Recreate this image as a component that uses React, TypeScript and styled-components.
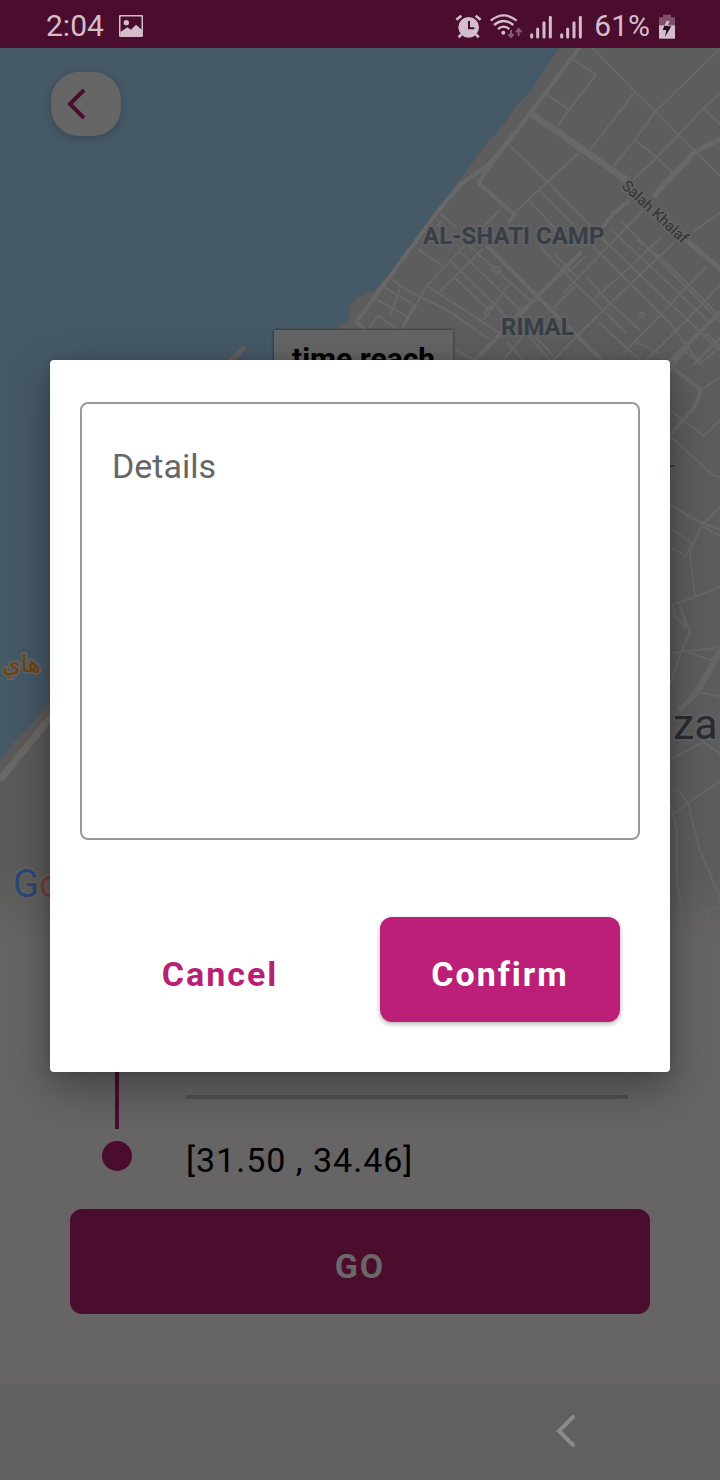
import React from "react";
import styled, { createGlobalStyle } from "styled-components";

const GlobalStyle = createGlobalStyle`
  * { box-sizing: border-box; }
  body { margin: 0; background: #666465; font-family: Roboto, "Noto Sans", sans-serif; }
  button, textarea { font-family: inherit; }
`;

const Page = styled.div`
  min-height: 100vh;
  display: flex;
  flex-direction: column;
`;

const StatusBar = styled.header`
  display: flex;
  justify-content: space-between;
  align-items: center;
  height: 48px;
  padding: 4px 44px 0 46px;
  background: #4b0d2e;
  color: #d4bdcb;
  font-size: 30px;
  line-height: 44px;
`;

const StatusGroup = styled.div<{ $gap: number }>`
  display: flex;
  align-items: center;
  gap: ${(p) => p.$gap}px;
`;

const Screen = styled.main`
  position: relative;
  flex: 1;
  display: flex;
  flex-direction: column;
`;

const MapArea = styled.section`
  position: relative;
  flex: 1;
  padding: 24px 51px;
  overflow: hidden;
  background: #5d5d5d;
`;

const MapDrawing = styled.svg`
  position: absolute;
  inset: 0;
  width: 100%;
  height: 100%;
`;

const BackButton = styled.button`
  position: relative;
  display: flex;
  align-items: center;
  width: 70px;
  height: 64px;
  padding: 0 15px;
  border: 0;
  border-radius: 28px;
  background: #666666;
  box-shadow: 0 2px 10px rgba(0, 0, 0, 0.2);
`;

const InfoWindow = styled.div`
  position: absolute;
  left: 274px;
  top: 282px;
  padding: 12px 18px;
  background: #646464;
  box-shadow: 0 0 3px rgba(0, 0, 0, 0.6);
  color: #000;
  font-size: 30px;
  font-weight: 700;
  line-height: 34px;
`;

const TripPanel = styled.section`
  display: flex;
  flex-direction: column;
  padding: 60px 70px 70px;
  background: #666465;
`;

const Route = styled.div`
  display: grid;
  grid-template-columns: 30px 1fr;
  column-gap: 54px;
  row-gap: 12px;
  padding: 0 22px 0 32px;
  margin-bottom: 30px;
`;

const RouteLine = styled.div`
  justify-self: center;
  width: 4px;
  height: 129px;
  background: #4b0d2e;
`;

const Divider = styled.hr`
  align-self: end;
  width: 100%;
  height: 4px;
  margin: 0 0 30px;
  border: 0;
  background: #525051;
`;

const RouteDot = styled.div`
  width: 30px;
  height: 30px;
  border-radius: 50%;
  background: #4b0d2e;
`;

const Coordinates = styled.div`
  color: #000;
  font-size: 34px;
  line-height: 38px;
  letter-spacing: 1px;
`;

const ActionButton = styled.button<{ $bg: string; $color: string; $raised?: boolean }>`
  width: 100%;
  height: 105px;
  padding: 8px 0 0;
  border: 0;
  border-radius: 12px;
  background: ${(p) => p.$bg};
  color: ${(p) => p.$color};
  box-shadow: ${(p) => (p.$raised ? "0 2px 5px rgba(0, 0, 0, 0.3)" : "none")};
  font-size: 34px;
  font-weight: 700;
  line-height: 40px;
  letter-spacing: 2px;
`;

const Overlay = styled.div`
  position: absolute;
  inset: 0;
  display: flex;
  align-items: center;
  padding: 0 50px;
`;

const Dialog = styled.form`
  flex: 1;
  display: flex;
  flex-direction: column;
  padding: 42px 30px 50px;
  border-radius: 4px;
  background: #fff;
  box-shadow: 0 16px 44px rgba(0, 0, 0, 0.34), 0 0 10px rgba(0, 0, 0, 0.14);
`;

const DetailsBox = styled.textarea`
  display: block;
  width: 100%;
  height: 438px;
  padding: 42px 30px;
  border: 2px solid #999;
  border-radius: 8px;
  outline: 0;
  resize: none;
  background: #fff;
  color: #222;
  font-size: 34px;
  line-height: 40px;
  &::placeholder { color: #666; opacity: 1; }
`;

const DialogActions = styled.div`
  display: grid;
  grid-template-columns: 1fr 1fr;
  gap: 40px;
  padding: 0 20px;
  margin-top: 77px;
`;

const NavBar = styled.nav`
  display: flex;
  align-items: center;
  justify-content: flex-end;
  height: 96px;
  padding-right: 20%;
  background: #606060;
`;

const NavButton = styled.button`
  display: flex;
  padding: 0;
  border: 0;
  background: none;
`;

const PictureIcon = () => (
  <svg width="24" height="22" viewBox="357 42 72 66" fill="none">
    <rect x="359" y="44" width="68" height="62" rx="4" stroke="currentColor" strokeWidth="5" />
    <circle cx="379" cy="65" r="8" fill="currentColor" />
    <path d="M361 93 L382 79 L393 86 L408 71 L427 88 V106 H361 Z" fill="currentColor" />
  </svg>
);

const AlarmIcon = () => (
  <svg width="27" height="25" viewBox="45 37 81 75" fill="none" stroke="currentColor">
    <circle cx="86" cy="77" r="31" fill="currentColor" stroke="none" />
    <path d="M49 54 L64 42 M107 42 L122 54" strokeWidth="8" />
    <path d="M64 98 L56 107 M108 98 L116 107" strokeWidth="8" />
    <path d="M87 58 V80 H103" stroke="#4b0d2e" strokeWidth="6" />
  </svg>
);

const WifiIcon = () => (
  <svg width="32" height="25" viewBox="150 37 96 75" fill="none" stroke="currentColor">
    <path d="M152 57 Q191 25 230 57 M162 70 Q191 46 220 70 M174 82 Q191 68 208 82" strokeWidth="7" />
    <circle cx="190" cy="93" r="6" fill="currentColor" stroke="none" />
    <g stroke="#875a74" strokeWidth="6">
      <path d="M213 85 V105 M205 97 L213 106 L221 97" />
      <path d="M236 103 V83 M228 91 L236 82 L244 91" />
    </g>
  </svg>
);

const SignalIcon = ({ width }: { width: number }) => (
  <svg width={width} height="25" viewBox={`270 37 ${width * 3} 75`} stroke="currentColor" strokeWidth="9" strokeLinecap="round">
    <path d="M275 99 V106 M293 82 V106 M312 63 V106 M331 47 V106" />
  </svg>
);

const BatteryIcon = () => (
  <svg width="18" height="25" viewBox="651 37 54 75">
    <path d="M654 47 H666 V39 H690 V47 H702 V72 H654 Z" fill="#80516c" />
    <path d="M654 71 H702 V111 H654 Z" fill="currentColor" />
    <path d="M676 58 H686 L679 74 H691 L672 105 L676 85 H665 Z" fill="#2b0819" />
    <path d="M676 58 H686 L680 72 H670 Z" fill="currentColor" />
  </svg>
);

const labelHalo = { stroke: "#626262", strokeWidth: 4, paintOrder: "stroke" as const, strokeLinejoin: "round" as const };

const CityMap = () => (
  <MapDrawing viewBox="0 48 720 892" preserveAspectRatio="xMidYMin slice" role="img" aria-label="Map of Gaza">
    <defs>
      <linearGradient id="fade" x1="0" y1="0" x2="0" y2="1">
        <stop offset="0" stopColor="#666465" stopOpacity="0" />
        <stop offset="1" stopColor="#666465" />
      </linearGradient>
    </defs>
    <rect y="48" width="720" height="892" fill="#5d5d5d" />
    <path d="M0 760 L50 695 V940 H0 Z" fill="#5d5b59" />
    <path
      d="M0 48 H560 L545 68 L532 90 L515 107 L505 123 L487 143 L467 170 L458 182 L440 207 L420 237 L390 273 L373 292 L367 293 L357 298 L350 307 V317 L347 323 L340 325 L334 332 L300 380 L50 700 L34 722 L14 742 L0 761 Z"
      fill="#465966"
    />
    <path d="M0 780 L20 755 L52 716" stroke="#6a6967" strokeWidth="7" fill="none" />
    <path d="M245 347 L228 363" stroke="#606060" strokeWidth="5" />
    <g transform="translate(340 40) scale(0.3333)" fill="none" stroke="#686868" strokeLinejoin="round">
      <g strokeWidth="12">
        <path d="M720 20 L575 215 L445 375 L365 430 L300 505 L50 845 L78 875" />
        <path d="M575 215 L440 390 L416 430 L524 525 L505 548" />
        <path d="M575 222 L730 330 L860 420" strokeWidth="20" />
        <path d="M1030 592 L1145 690" strokeWidth="15" />
        <path d="M1145 295 L1065 335 L940 470" strokeWidth="16" />
        <path d="M870 480 L820 520 L785 565 M725 635 L592 770 L400 965" />
        <path d="M438 615 L592 770 L790 965" />
        <path d="M1145 812 L975 980" />
      </g>
      <g strokeWidth="6">
        <path d="M700 60 L768 103 L650 260 M620 162 L685 208 M755 20 L885 155 L945 215 L1065 335 M885 155 L750 330" />
        <path d="M1145 22 L945 215 L885 300 L820 380 M1145 155 L1090 205 L1013 287 L950 352 L870 430 M1090 205 L1145 257" />
        <path d="M885 300 L950 352 L1000 400 M1070 340 L1145 412 M720 335 L622 425 L520 522 M510 318 L622 425 L755 560" />
        <path d="M598 452 L705 560 M568 483 L660 580 M480 510 L370 620 L260 740 L185 870 M300 518 L345 560" />
        <path d="M235 628 L310 680 M385 615 L480 700 L580 790 M360 635 L550 820 M330 662 L470 800 L515 850 M345 715 L445 808" />
        <path d="M265 740 L480 880 M300 755 L430 625 M150 712 L190 745 L330 815 L450 900 M130 740 L215 790 M105 775 L140 795 L210 835" />
        <path d="M180 745 L150 830 M225 790 L185 865 M85 865 L115 828 L170 865 M345 928 L400 960" />
        <path d="M455 795 L430 825 M510 730 L430 840 M550 800 L500 860" />
        <path d="M600 620 L710 735 L860 880 M640 640 L720 720 M680 700 L735 650 M705 740 L640 805 M740 600 L990 850 L1080 970" />
        <path d="M765 575 L1000 800 L1145 935 M815 570 L1060 800 L1110 850 M845 545 L1145 850 M890 600 L965 655 L1145 835" />
        <path d="M910 510 L765 660 L670 760 M965 590 L860 690 L760 780 M1000 610 L790 810 L640 960 M1100 680 L985 800 L850 940" />
        <path d="M1145 515 L1060 575 M1145 730 L1050 830 L920 960 M780 850 L850 915 L900 960 M885 905 L960 940" />
        <path d="M740 710 L800 780 L900 870 M560 880 L630 960 M500 905 L550 960 M545 850 L640 945 M490 960 L540 900 L570 850" />
        <path d="M1145 890 L1060 975 M1100 880 L1145 925" />
        <path d="M455 690 L462 678 L478 682 L481 697 L468 702 Z M898 824 L906 816 L914 824 L906 832 Z M290 540 L302 545 L292 560" />
      </g>
    </g>
    <g fill="none" stroke="#676767" strokeWidth="2">
      <path d="M668 364 L701 390 L695 407 L670 435 M668 372 L690 342" strokeWidth="4" />
      <path d="M722 648 L697 692 L679 711" strokeWidth="6" />
      <path d="M670 436 L713 475 L722 477 M670 410 L704 436 L722 418 M701 390 L722 376 M683 349 L700 364 L722 345" />
      <path d="M670 505 L702 523 L722 530" strokeWidth="3" />
      <path d="M670 528 L692 543 L686 556 L670 547 M690 555 L699 530 L704 523 L722 505 M690 555 L695 597 L672 605 M695 597 L722 586" />
      <path d="M702 526 L722 537 M672 605 L675 616 L686 629 L680 605 L690 632 L682 650 L670 684 M670 653 L700 650 L722 647 M682 650 L716 662 M697 692 L722 697" />
      <path d="M670 760 L703 742 L722 755 M670 792 L678 789 L688 803 L722 780 M674 814 L688 803 L699 848 L722 903" />
      <path d="M670 804 L677 830 V880 L682 912 L696 914 L722 906 M709 910 L706 935 M682 912 V938" />
    </g>
    <rect y="870" width="720" height="70" fill="url(#fade)" />
    <g {...labelHalo} fill="#373e48" fontFamily="Roboto" fontSize="24" fontWeight="700">
      <text x="423" y="244">AL-SHATI CAMP</text>
      <text x="501" y="335">RIMAL</text>
    </g>
    <g {...labelHalo} fill="#313131" fontFamily="Roboto">
      <text transform="translate(621 187) rotate(43)" fontSize="15">Salah Khalaf</text>
      <text x="664" y="478" fontSize="18">T</text>
      <text x="673" y="739" fontSize="43" fill="#292d31">za</text>
    </g>
    <text x="2" y="672" fontFamily="DejaVu Sans" fontSize="24" fill="#71420f" {...labelHalo}>هاي</text>
    <text x="13" y="897" fontFamily="Roboto" fontSize="38" {...labelHalo}>
      <tspan fill="#2b4878">G</tspan>
      <tspan fill="#743a38">o</tspan>
    </text>
  </MapDrawing>
);

export default function App() {
  return (
    <Page>
      <GlobalStyle />
      <StatusBar>
        <StatusGroup $gap={15}>
          <span>2:04</span>
          <PictureIcon />
        </StatusGroup>
        <StatusGroup $gap={8}>
          <AlarmIcon />
          <WifiIcon />
          <SignalIcon width={22} />
          <SignalIcon width={26} />
          <span>61%</span>
          <BatteryIcon />
        </StatusGroup>
      </StatusBar>
      <Screen>
        <MapArea>
          <CityMap />
          <BackButton type="button" aria-label="Back">
            <svg width="20" height="32" viewBox="0 0 20 32" fill="none" stroke="#4b0d2e" strokeWidth="4">
              <path d="M18 2 L4 16 L18 30" />
            </svg>
          </BackButton>
          <InfoWindow>time reach</InfoWindow>
        </MapArea>
        <TripPanel>
          <Route>
            <RouteLine />
            <Divider />
            <RouteDot />
            <Coordinates>[31.50 , 34.46]</Coordinates>
          </Route>
          <ActionButton type="button" $bg="#4b0d2e" $color="#6b6769">GO</ActionButton>
        </TripPanel>
        <Overlay>
          <Dialog role="dialog" aria-label="Details">
            <DetailsBox aria-label="Details" placeholder="Details" />
            <DialogActions>
              <ActionButton type="button" $bg="transparent" $color="#b91f75">Cancel</ActionButton>
              <ActionButton type="button" $bg="#bc1f77" $color="#fff" $raised>Confirm</ActionButton>
            </DialogActions>
          </Dialog>
        </Overlay>
      </Screen>
      <NavBar>
        <NavButton type="button" aria-label="System back">
          <svg width="20" height="34" viewBox="0 0 20 34" fill="none" stroke="#8a8a8a" strokeWidth="4" strokeLinecap="round">
            <path d="M17 2 L3 16 L17 30" />
          </svg>
        </NavButton>
      </NavBar>
    </Page>
  );
}
